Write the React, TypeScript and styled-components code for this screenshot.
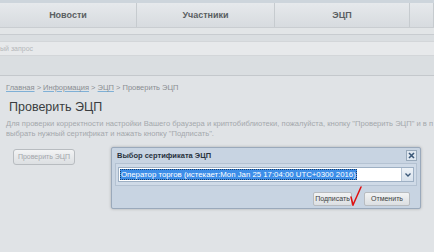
import styled, { createGlobalStyle } from 'styled-components';

const GlobalStyles = createGlobalStyle`
  html, body {
    margin: 0;
    padding: 0;
    background-color: #e0e3e6;
    font-family: 'Liberation Sans', Arial, sans-serif;
  }
`;

const Page = styled.div`
  position: relative;
  width: 434px;
  height: 252px;
  overflow: hidden;
  background-color: #e0e3e6;
`;

const Header = styled.div`
  background-color: #dadee1;
  border-bottom: 1px solid #c4c8cc;
  height: 75px;
`;

const TopStrip = styled.div`
  height: 3px;
  background: #cdd5dc;
`;

const Nav = styled.nav`
  display: grid;
  grid-template-columns: 137px 138px 135px 24px;
  height: 24px;
  background: linear-gradient(#e6e9ec, #d7dbdf);
  border-bottom: 1px solid #c9cdd1;
`;

const NavItem = styled.div`
  display: flex;
  align-items: center;
  justify-content: center;
  border-right: 1px solid #c6cbcf;
  font-size: 9px;
  font-weight: bold;
  color: #5a5e62;
`;

const SubBar = styled.div`
  height: 6px;
  background: #e2e5e7;
  border-bottom: 1px solid #c8ccd0;
`;

const SearchRow = styled.div`
  padding-top: 6px;
`;

const SearchInput = styled.div`
  height: 13px;
  background: #e7e9eb;
  border-top: 1px solid #d3d6d9;
  border-bottom: 1px solid #d3d6d9;
  font-size: 7px;
  line-height: 13px;
  color: #b4b7ba;
`;

const Content = styled.div`
  padding: 7px 0 0 6px;
`;

const Crumbs = styled.div`
  font-size: 7.5px;
  color: #8a8e92;
  white-space: nowrap;
`;

const Crumb = styled.a`
  color: #8a8e92;
  text-decoration: underline;
  text-decoration-color: #7fb0d6;
`;

const Title = styled.h1`
  margin: 8px 0 0 3px;
  font-size: 12.5px;
  font-weight: normal;
  color: #3a3d40;
`;

const Text = styled.p`
  margin: 5px 0 0 0;
  font-size: 7.6px;
  line-height: 10px;
  color: #a4a8ac;
  white-space: nowrap;
`;

const Button = styled.button<{ $muted?: boolean; $w: number }>`
  width: ${p => p.$w}px;
  height: 14px;
  padding: 0;
  border: 1px solid #b8bcc0;
  border-radius: 2px;
  background: linear-gradient(#f2f3f4, #dcdfe2);
  font-family: 'Liberation Sans', Arial, sans-serif;
  font-size: 7px;
  line-height: 12px;
  color: ${p => (p.$muted ? '#a2a6aa' : '#3c3f42')};
`;

const CheckButton = styled(Button)`
  height: 16px;
  border-radius: 3px;
`;

const CheckRow = styled.div`
  margin: 6px 0 0 7px;
`;

const Dialog = styled.div`
  position: absolute;
  left: 111px;
  top: 147px;
  width: 310px;
  height: 62px;
  background: #c8d4e2;
  border: 1px solid #9aa9bb;
  border-radius: 2px;
  box-shadow: 0 0 3px rgba(0, 0, 0, 0.25);
  padding: 0 3px;
  box-sizing: border-box;
`;

const DialogHead = styled.div`
  display: flex;
  align-items: center;
  justify-content: space-between;
  height: 15px;
  padding-left: 2px;
  font-size: 7.5px;
  font-weight: bold;
  color: #27323d;
`;

const Close = styled.div`
  width: 9px;
  height: 9px;
  border: 1px solid #99aabb;
  background: #dfe7f0;
  display: flex;
  align-items: center;
  justify-content: center;
`;

const Panel = styled.div`
  border: 1px solid #b4c2d2;
  background: #cfdae7;
  padding: 3px 2px;
  display: flex;
`;

const Select = styled.div`
  flex: 1;
  display: flex;
  height: 13px;
  background: #fff;
  border: 1px solid #9eb0c4;
`;

const Selected = styled.div`
  flex: 1;
  display: flex;
  align-items: center;
  padding: 0 1px;
  overflow: hidden;
`;

const Highlight = styled.span`
  display: block;
  background: #3d8ee8;
  color: #fff;
  font-size: 7.8px;
  line-height: 11px;
  height: 11px;
  padding: 0 1px;
  outline: 1px dotted #1a3c66;
  outline-offset: -1px;
  white-space: nowrap;
`;

const Arrow = styled.div`
  width: 11px;
  border-left: 1px solid #b8c6d6;
  background: linear-gradient(#eef3f8, #d7e1ec);
  display: flex;
  align-items: center;
  justify-content: center;
`;

const Footer = styled.div`
  display: flex;
  justify-content: flex-end;
  align-items: center;
  gap: 12px;
  padding: 6px 7px 0 0;
  position: relative;
`;

const Tick = styled.svg`
  position: absolute;
  right: 55px;
  top: 0px;
`;

export default function App() {
  return (
    <Page>
      <GlobalStyles />
      <Header>
        <TopStrip />
        <Nav>
          <NavItem>Новости</NavItem>
          <NavItem>Участники</NavItem>
          <NavItem>ЭЦП</NavItem>
          <NavItem />
        </Nav>
        <SubBar />
        <SearchRow>
          <SearchInput>ый запрос</SearchInput>
        </SearchRow>
      </Header>
      <Content>
        <Crumbs>
          <Crumb>Главная</Crumb> &gt; <Crumb>Информация</Crumb> &gt; <Crumb>ЭЦП</Crumb> &gt; Проверить ЭЦП
        </Crumbs>
        <Title>Проверить ЭЦП</Title>
        <Text>
          Для проверки корректности настройки Вашего браузера и криптобиблиотеки, пожалуйста, кнопку "Проверить ЭЦП" и в п
          <br />
          выбрать нужный сертификат и нажать кнопку "Подписать".
        </Text>
        <CheckRow>
          <CheckButton $muted $w={62}>Проверить ЭЦП</CheckButton>
        </CheckRow>
      </Content>
      <Dialog>
        <DialogHead>
          Выбор сертификата ЭЦП
          <Close>
            <svg width="7" height="7" viewBox="0 0 7 7">
              <path d="M1 1 L6 6 M6 1 L1 6" stroke="#3b5878" strokeWidth="1.6" />
            </svg>
          </Close>
        </DialogHead>
        <Panel>
          <Select>
            <Selected>
              <Highlight>Оператор торгов (истекает:Mon Jan 25 17:04:00 UTC+0300 2016)</Highlight>
            </Selected>
            <Arrow>
              <svg width="6" height="4" viewBox="0 0 6 4">
                <path d="M0.5 0.5 L3 3 L5.5 0.5" fill="none" stroke="#3b5878" strokeWidth="1.3" />
              </svg>
            </Arrow>
          </Select>
        </Panel>
        <Footer>
          <Button $w={39}>Подписать</Button>
          <Button $w={46}>Отменить</Button>
          <Tick width="12" height="20" viewBox="0 0 12 20">
            <path d="M1 11 L3 19 L11 1" fill="none" stroke="#e01010" strokeWidth="1.5" strokeLinecap="round" />
          </Tick>
        </Footer>
      </Dialog>
    </Page>
  );
}
